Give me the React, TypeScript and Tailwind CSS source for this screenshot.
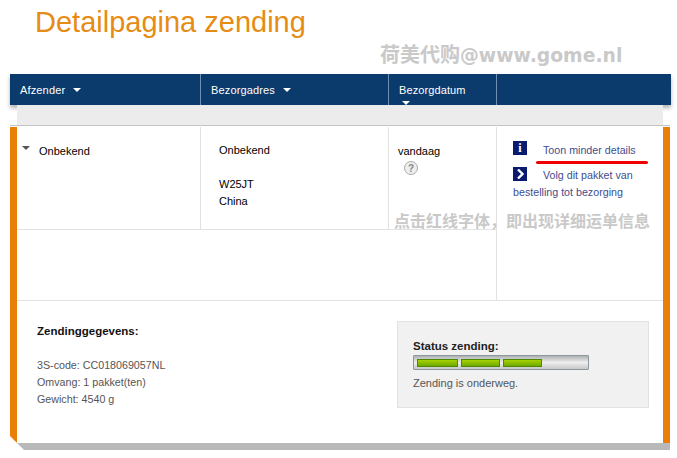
import React from 'react';

const sans = "font-['Liberation_Sans',Arial,sans-serif]";

const Caret = ({ className }: { className: string }) => (
  <svg width="8" height="4" viewBox="0 0 8 4" className={className}>
    <path d="M0 0h8L4 4z" fill="currentColor" />
  </svg>
);

const HeadCell = ({ label, className }: { label: string; className: string }) => (
  <div className={`flex items-center pl-[10px] pt-[2px] text-[11px] tracking-[0.15px] text-white ${className}`}>
    <span>{label}</span>
    <Caret className="ml-[8px] mt-[-1px] text-white" />
  </div>
);

const Segment = ({ width }: { width: string }) => (
  <div className={`h-[8px] border border-[#4e8a00] bg-gradient-to-b from-[#a6d400] to-[#6fa800] ${width}`} />
);

const App = () => {
  return (
    <div className={`relative h-[458px] w-[677px] overflow-hidden bg-white text-[11px] ${sans}`}>
      <h1 className="h-[74px] pl-[35px] pt-[4px] text-[29px] leading-[36px] text-[#e68c14]">Detailpagina zending</h1>

      <div className="ml-[10px] mr-[6px] flex h-[31px] bg-[#0b3a6d] shadow-[0_3px_4px_rgba(0,0,0,0.3)]">
        <HeadCell label="Afzender" className="w-[191px] border-r border-[#6f8fb3]" />
        <HeadCell label="Bezorgadres" className="w-[188px] border-r border-[#6f8fb3]" />
        <div className="relative w-[108px] border-r border-[#6f8fb3] pl-[10px] pt-[10px] text-[11px] leading-[13px] tracking-[0.1px] text-white">
          Bezorgdatum
          <Caret className="absolute bottom-0 left-[13px] text-white" />
        </div>
        <div className="flex-1" />
      </div>

      <div className="ml-[17px] mr-[14px] h-[20px] bg-[#ececec]" />
      <div className="ml-[10px] mr-[7px] h-[2px] border-t border-[#c4c4c4] bg-white" />

      <div className="relative ml-[10px] mr-[7px] flex h-[316px] flex-col border-x-[7px] border-[#ea7f08]">
        <div className="flex h-[174px] border-b border-[#e2e2e2]">
          <div className="flex flex-1 flex-col">
            <div className="flex h-[103px] border-b border-[#e2e2e2] text-black">
              <div className="relative h-full w-[184px] border-r border-[#e2e2e2] pl-[22px] pt-[18px] leading-[13px]">
                <Caret className="absolute left-[5px] top-[19px] text-[#555]" />
                Onbekend
              </div>
              <div className="h-full w-[188px] border-r border-[#e2e2e2] pl-[18px] pt-[15px] leading-[17px]">
                <div>Onbekend</div>
                <div className="mt-[17px]">W25JT</div>
                <div>China</div>
              </div>
              <div className="flex-1 pl-[9px] pt-[18px] leading-[13px]">
                <div>vandaag</div>
                <div className="ml-[6px] mt-[3px] flex h-[14px] w-[14px] items-center justify-center rounded-full border border-[#aaa] bg-[#eee] text-[10px] font-bold text-[#888]">?</div>
              </div>
            </div>
          </div>
          <div className="w-[167px] border-l border-[#e2e2e2] pl-[16px] pt-[14px] text-[10.7px] text-[#3f4d8f]">
            <div className="flex h-[26px]">
              <div className="flex h-[14px] w-[14px] items-center justify-center bg-[#0a1a6e] font-['Liberation_Serif',serif] text-[12px] font-bold leading-none text-white">i</div>
              <span className="ml-[16px] leading-[19px]">Toon minder details</span>
            </div>
            <div className="leading-[17px]">
              <span className="mr-[16px] inline-flex h-[14px] w-[14px] items-center justify-center bg-[#0a1a6e] align-[0px]">
                <svg width="8" height="10" viewBox="0 0 8 10">
                  <path d="M2 0.5 6.5 5 2 9.5" fill="none" stroke="#fff" strokeWidth="2.4" />
                </svg>
              </span>
              Volg dit pakket van
              <br />
              bestelling tot bezorging
            </div>
          </div>
        </div>

        <div className="flex flex-1 pl-[20px] pt-[20px]">
          <div className="w-[360px] pt-[4px]">
            <div className="text-[11.5px] font-bold leading-[13px] text-[#111]">Zendinggegevens:</div>
            <div className="mt-[19px] text-[10.7px] leading-[17px] text-[#555]">
              <div>3S-code: CC018069057NL</div>
              <div>Omvang: 1 pakket(ten)</div>
              <div>Gewicht: 4540 g</div>
            </div>
          </div>
          <div className="h-[87px] w-[252px] border border-[#e2e2e2] bg-[#f1f1f1] pl-[15px] pt-[18px]">
            <div className="text-[11.5px] font-bold leading-[13px] text-[#222]">Status zending:</div>
            <div className="mt-[2px] flex h-[15px] w-[176px] items-center gap-[3px] rounded-[1px] border border-[#8d979c] bg-gradient-to-b from-[#aeb2b4] via-[#eee] to-[#c8c8c8] px-[3px]">
              <Segment width="w-[41px]" />
              <Segment width="w-[39px]" />
              <Segment width="w-[39px]" />
            </div>
            <div className="mt-[7px] text-[11px] leading-[13px] text-[#555]">Zending is onderweg.</div>
          </div>
        </div>

        {/* folded corner at the bottom left */}
        <svg width="7" height="7" viewBox="0 0 7 7" className="absolute bottom-0 left-[-7px]">
          <path d="M0 0V7H7z" fill="#fff" />
        </svg>
      </div>

      <div className="ml-[17px] mr-[7px] h-[7px] bg-[#b9b9b9] [clip-path:polygon(0_0,100%_0,100%_100%,7px_100%)]" />

      <div className="absolute left-[380px] top-[41px] text-[20px] font-bold leading-[28px] text-[#c9c9c9] font-['DejaVu_Sans','Noto_Sans_CJK_SC',sans-serif]">
        荷美代购<span className="text-[18.8px]">@www.gome.nl</span>
      </div>
      <div className="absolute left-[394px] top-[212px] text-[16px] font-bold leading-[20px] text-[#c9c9c9] font-['Liberation_Sans','Noto_Sans_CJK_SC',sans-serif]">
        点击红线字体，即出现详细运单信息
      </div>
      <div className="absolute left-[536px] top-[161px] h-[3px] w-[112px] rounded-full bg-[#f00000]" />
    </div>
  );
};

export default App;
